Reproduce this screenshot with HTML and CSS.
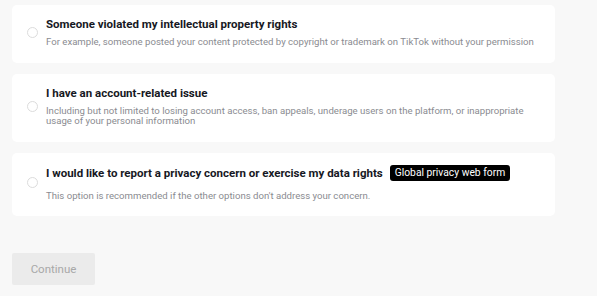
FILE: index.html
```html
<!DOCTYPE html>
<html lang="en">
<head>
<meta charset="UTF-8" />
<title>Report a concern</title>
<link rel="stylesheet" href="styles.css">
</head>
<body>

  <div class="options">
    <label class="option">
      <span class="radio"></span>
      <span class="option-body">
        <span class="option-title">Someone violated my intellectual property rights</span>
        <span class="option-desc">For example, someone posted your content protected by copyright or trademark on TikTok without your permission</span>
      </span>
    </label>

    <label class="option">
      <span class="radio"></span>
      <span class="option-body">
        <span class="option-title">I have an account-related issue</span>
        <span class="option-desc">Including but not limited to losing account access, ban appeals, underage users on the platform, or inappropriate usage of your personal information</span>
      </span>
    </label>

    <label class="option">
      <span class="radio"></span>
      <span class="option-body">
        <span class="option-title with-badge">I would like to report a privacy concern or exercise my data rights <span class="badge">Global privacy web form</span></span>
        <span class="option-desc">This option is recommended if the other options don't address your concern.</span>
      </span>
    </label>
  </div>

  <button class="continue" disabled>Continue</button>

</body>
</html>
```

FILE: styles.css
```css
body {
  margin: 0;
  padding: 5px 42px 0 12px;
  background: #f8f8f8;
  font-family: Roboto, "Liberation Sans", sans-serif;
  color: #161823;
}
.options {
  display: flex;
  flex-direction: column;
  gap: 11px;
}
.option {
  display: flex;
  align-items: center;
  background: #fff;
  border-radius: 5px;
  padding: 12px 15px 15px 15px;
  cursor: pointer;
}
.radio {
  flex: none;
  width: 9px;
  height: 9px;
  border: 1px solid #dcdcdc;
  border-radius: 50%;
  margin-right: 8px;
}
.option-body {
  display: flex;
  flex-direction: column;
  gap: 6px;
}
.option-title {
  font-size: 11.5px;
  font-weight: bold;
  line-height: 14px;
}
.option-title.with-badge {
  display: flex;
  align-items: center;
  gap: 7px;
  line-height: 16px;
  margin-bottom: 4px;
}
.option-desc {
  font-size: 9.6px;
  line-height: 10.5px;
  color: #8a8b91;
}
.badge {
  padding: 0 5px;
  background: #000;
  color: #fff;
  font-weight: normal;
  font-size: 10.3px;
  line-height: 16px;
  border-radius: 3px;
}
.continue {
  margin-top: 37px;
  width: 83px;
  height: 32px;
  border: none;
  border-radius: 2px;
  background: #ebebeb;
  color: #a8a8a8;
  font-family: inherit;
  font-size: 11.5px;
}
```
